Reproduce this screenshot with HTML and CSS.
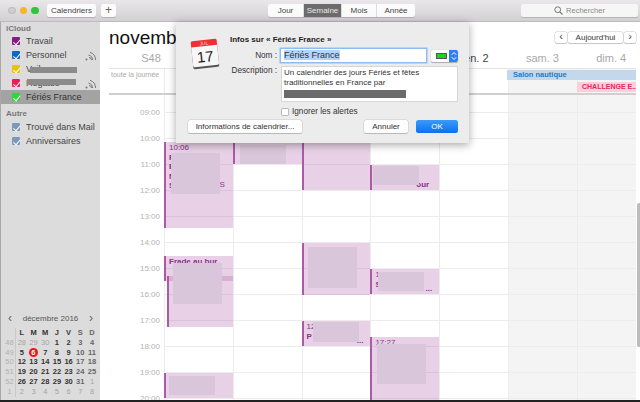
FILE: index.html
```html
<!DOCTYPE html>
<html lang="fr">
<head>
    <meta charset="UTF-8">
    <meta name="viewport" content="width=device-width, initial-scale=1.0">
    <title>Calendrier</title>
    <link rel="stylesheet" href="styles.css">
</head>
<body>
    <div class="window">
        <header class="toolbar">
            <div class="lights">
                <span class="light light-off"></span>
                <span class="light light-min"></span>
                <span class="light light-max"></span>
            </div>
            <button class="tool-btn btn-cals">Calendriers</button>
            <button class="tool-btn btn-add">+</button>
            <div class="segments">
                <span class="segment seg-jour">Jour</span>
                <span class="segment seg-semaine active">Semaine</span>
                <span class="segment seg-mois">Mois</span>
                <span class="segment seg-annee">Année</span>
            </div>
            <div class="search">
                <svg width="9" height="9" viewBox="0 0 9 9"><circle cx="3.7" cy="3.7" r="2.9" fill="none" stroke="#777" stroke-width="1"/><path d="M5.8 5.8 8.5 8.5" stroke="#777" stroke-width="1.1"/></svg>
                <span>Rechercher</span>
            </div>
        </header>

        <div class="content">
            <aside class="sidebar">
                <h4 class="side-title">iCloud</h4>
                <ul class="cal-list">
                    <li class="cal-row"><span class="check c-travail"></span>Travail</li>
                    <li class="cal-row"><span class="check c-perso"></span>Personnel
                        <svg class="shared" width="11" height="10" viewBox="0 0 11 10"><g fill="none" stroke="#777" stroke-width="1"><path d="M4.5 9A2.5 2.5 0 0 0 2 6.5" transform="translate(2 0)"/><path d="M7.5 9A5 5 0 0 0 3.5 4.1"/><path d="M10.5 9A8 8 0 0 0 5 1.3"/></g><circle cx="1.5" cy="8.5" r="1" fill="#777"/></svg>
                    </li>
                    <li class="cal-row"><span class="check c-jaune"></span>Voile<span class="redact-side r-one"></span></li>
                    <li class="cal-row"><span class="check c-rose"></span>Régates<span class="redact-side r-two"></span>
                        <svg class="shared" width="11" height="10" viewBox="0 0 11 10"><g fill="none" stroke="#777" stroke-width="1"><path d="M4.5 9A2.5 2.5 0 0 0 2 6.5" transform="translate(2 0)"/><path d="M7.5 9A5 5 0 0 0 3.5 4.1"/><path d="M10.5 9A8 8 0 0 0 5 1.3"/></g><circle cx="1.5" cy="8.5" r="1" fill="#777"/></svg>
                    </li>
                    <li class="cal-row selected"><span class="check c-vert"></span>Fériés France</li>
                </ul>
                <h4 class="side-title side-other">Autre</h4>
                <ul class="cal-list">
                    <li class="cal-row"><span class="check c-gris"></span>Trouvé dans Mail</li>
                    <li class="cal-row"><span class="check c-gris"></span>Anniversaires</li>
                </ul>

                <div class="mini">
                    <div class="mini-head">
                        <span class="mini-arrow">‹</span>
                        <span>décembre 2016</span>
                        <span class="mini-arrow">›</span>
                    </div>
                    <div class="mini-grid">
                        <span class="wk"></span><b>L</b><b>M</b><b>M</b><b>J</b><b>V</b><em>S</em><em>D</em>
                        <span class="wk">48</span><i>28</i><i>29</i><i>30</i><b>1</b><b>2</b><em>3</em><em>4</em>
                        <span class="wk">49</span><b>5</b><b class="today">6</b><b>7</b><b>8</b><b>9</b><em>10</em><em>11</em>
                        <span class="wk">50</span><b>12</b><b>13</b><b>14</b><b>15</b><b>16</b><em>17</em><em>18</em>
                        <span class="wk">51</span><b>19</b><b>20</b><b>21</b><b>22</b><b>23</b><em>24</em><em>25</em>
                        <span class="wk">52</span><b>26</b><b>27</b><b>28</b><b>29</b><b>30</b><em>31</em><i>1</i>
                        <span class="wk">1</span><i>2</i><i>3</i><i>4</i><i>5</i><i>6</i><i>7</i><i>8</i>
                    </div>
                </div>
            </aside>

            <main class="main">
                <div class="main-head">
                    <h1 class="month">novembre 2016</h1>
                    <div class="nav">
                        <span class="nav-btn">‹</span>
                        <span class="nav-btn nav-today">Aujourd'hui</span>
                        <span class="nav-btn">›</span>
                    </div>
                </div>

                <div class="day-head">
                    <span class="week-no">S48</span>
                    <span>lun. 28</span>
                    <span>mar. 29</span>
                    <span>mer. 30</span>
                    <span>jeu. 1</span>
                    <span class="dark">ven. 2</span>
                    <span>sam. 3</span>
                    <span>dim. 4</span>
                </div>

                <div class="allday">
                    <span class="allday-label">toute la journée</span>
                    <div class="allday-grid">
                        <span class="col-line"></span>
                        <span class="col-line"></span>
                        <span class="col-line"></span>
                        <span class="col-line"></span>
                        <span class="col-line"></span>
                        <span class="col-line we"></span>
                        <span class="col-line we"></span>
                        <span class="banner salon">Salon nautique</span>
                        <span class="banner challenge">CHALLENGE E..</span>
                    </div>
                </div>

                <div class="timeline">
                    <div class="hours">
                        <span>09:00</span><span>10:00</span><span>11:00</span><span>12:00</span><span>13:00</span><span>14:00</span><span>15:00</span><span>16:00</span><span>17:00</span><span>18:00</span><span>19:00</span><span>20:00</span>
                    </div>
                    <div class="days">
                        <div class="day">
                            <div class="event ev-a">10:06<br><strong>F<br>E<br>N<br>S</strong><span class="tail">S</span><span class="redact rd-a"></span></div>
                            <div class="event ev-b"><strong>Frade au bur</strong></div>
                            <div class="event ev-c"></div>
                            <span class="redact rd-c"></span>
                            <div class="event ev-d"><span class="redact rd-d"></span></div>
                        </div>
                        <div class="day">
                            <div class="event ev-e"><span class="redact rd-e"></span></div>
                        </div>
                        <div class="day">
                            <div class="event ev-f"></div>
                            <div class="event ev-g"><span class="redact rd-g"></span></div>
                            <div class="event ev-h">12<br><strong>P</strong><span class="tail">...</span><span class="redact rd-h"></span></div>
                        </div>
                        <div class="day">
                            <div class="event ev-i"><span class="tail">our</span><span class="redact rd-i"></span></div>
                            <div class="event ev-j">1<br><strong>S</strong><span class="tail">...</span><span class="redact rd-j"></span></div>
                            <div class="event ev-k">17:27<span class="redact rd-k"></span></div>
                        </div>
                        <div class="day"></div>
                        <div class="day we"></div>
                        <div class="day we"></div>
                    </div>
                </div>
                <div class="scrollbar"></div>
            </main>
        </div>

        <section class="dialog">
            <svg class="cal-icon" width="36" height="38" viewBox="0 0 36 38">
                <g transform="rotate(-6 18 19)">
                    <rect x="5" y="6" width="26" height="27" rx="1.5" fill="#555"/>
                    <rect x="5" y="5" width="26" height="26" rx="1.5" fill="#f7f7f7"/>
                    <path d="M5 11V6.5A1.5 1.5 0 0 1 6.500 5h23A1.500 1.500 0 0 1 31 6.500V11Z" fill="#ee2f36"/>
                    <text x="18" y="10" font-size="5" text-anchor="middle" fill="#ffd0d0" font-family="Liberation Sans, sans-serif">JUL</text>
                    <text x="18" y="27" font-size="15" text-anchor="middle" fill="#222" font-family="Liberation Sans, sans-serif">17</text>
                </g>
            </svg>
            <div class="dialog-body">
                <h3 class="dialog-title">Infos sur « Fériés France »</h3>
                <div class="field">
                    <label>Nom :</label>
                    <div class="name-input"><span class="sel">Fériés France</span></div>
                    <div class="color-pop">
                        <span class="color-well"><span></span></span>
                        <span class="color-arrows">
                            <svg width="6" height="10" viewBox="0 0 6 10"><path d="M.8 3.800 3 1.500 5.200 3.800M.8 6.200 3 8.500 5.200 6.200" fill="none" stroke="#fff" stroke-width="1"/></svg>
                        </span>
                    </div>
                </div>
                <div class="field field-desc">
                    <label>Description :</label>
                    <div class="desc">Un calendrier des jours Fériés et fêtes traditionnelles en France par<br><span class="redact-desc"></span></div>
                </div>
                <div class="ignore"><span class="box"></span>Ignorer les alertes</div>
            </div>
            <div class="dialog-actions">
                <button class="dlg-btn btn-info">Informations de calendrier...</button>
                <button class="dlg-btn btn-cancel">Annuler</button>
                <button class="dlg-btn btn-ok">OK</button>
            </div>
        </section>
    </div>
</body>
</html>
```

FILE: styles.css
```css
* {
    box-sizing: border-box;
}

html, body {
    margin: 0;
    height: 100%;
    overflow: hidden;
}

body {
    background: #222;
    color: #333;
    font-family: "Liberation Sans", Arial, sans-serif;
    font-size: 9px;
}

ul {
    list-style: none;
    margin: 0;
    padding: 0;
}

.window {
    position: relative;
    width: 640px;
    height: 400px;
    display: flex;
    flex-direction: column;
    background: #fff;
}

/* toolbar */
.toolbar {
    height: 22px;
    flex: none;
    display: flex;
    align-items: flex-start;
    padding: 4px 2px 0 8px;
    background: linear-gradient(#e9e7e9, #d2d0d2);
    border-bottom: 1px solid #bdbbbd;
}

.lights {
    display: flex;
    gap: 4px;
    width: 39px;
    padding-top: 2.500px;
}

.light {
    width: 7.500px;
    height: 7.500px;
    border-radius: 50%;
}

.light-off { background: #cfcdcf; border: 1px solid #b9b7b9; }
.light-min { background: #f5b52c; }
.light-max { background: #2fc53f; }

.tool-btn {
    height: 12.500px;
    padding: 0;
    border: 0;
    border-radius: 2px;
    background: #fbfbfb;
    box-shadow: 0 1px 0 #b5b3b5;
    color: #444;
    font: 8px "Liberation Sans", Arial, sans-serif;
}

.btn-cals { width: 49px; }
.btn-add { width: 15px; margin-left: 5px; font-size: 12px; line-height: 10px; color: #666; }

.segments {
    display: flex;
    height: 13px;
    margin-left: 152px;
    border-radius: 2px;
    background: #fbfbfb;
    box-shadow: 0 1px 0 #b5b3b5;
    font-size: 8px;
    line-height: 13px;
    color: #444;
    text-align: center;
}

.segment { border-right: 1px solid #ddd; }
.seg-jour { width: 36px; }
.seg-semaine { width: 38px; }
.seg-mois { width: 35px; }
.seg-annee { width: 38px; border-right: 0; }

.segment.active {
    background: #6c6c6c;
    color: #e8e8e8;
}

.search {
    width: 117px;
    height: 12.500px;
    margin-left: auto;
    display: flex;
    align-items: center;
    justify-content: center;
    gap: 3px;
    border-radius: 2px;
    background: #f6f6f6;
    box-shadow: 0 1px 0 #b5b3b5;
    font-size: 7.500px;
    color: #8a8a8a;
}

/* sidebar */
.content {
    flex: 1;
    display: flex;
    min-height: 0;
}

.sidebar {
    width: 100px;
    flex: none;
    display: flex;
    flex-direction: column;
    background: #dddcdd;
    border-left: 1px solid #a8a8a8;
    padding-top: 2px;
}

.side-title {
    margin: 0 0 0 5px;
    height: 10px;
    font-size: 8px;
    line-height: 10px;
    font-weight: bold;
    color: #777;
}

.side-other { margin: 5px 0 1px 5px; }

.cal-row {
    position: relative;
    height: 14px;
    display: flex;
    align-items: center;
    padding-left: 11px;
    font-size: 9px;
    color: #444;
}

.cal-row.selected { background: #a3a3a3; color: #333; }

.check {
    position: relative;
    width: 8px;
    height: 8px;
    margin-right: 6px;
    border-radius: 1px;
}

.check::after {
    content: "";
    position: absolute;
    left: 2.500px;
    top: .5px;
    width: 3px;
    height: 5.500px;
    border: solid #fff;
    border-width: 0 1px 1px 0;
    transform: rotate(40deg);
}

.c-travail { background: #871b85; }
.c-perso { background: #1068c6; }
.c-jaune { background: #e6c40e; }
.c-rose { background: #ef1a5d; }
.c-vert { background: #2fd53a; }
.c-gris { background: #7f98ba; }

.shared {
    position: absolute;
    right: 4px;
    top: 3px;
}

.redact-side {
    position: absolute;
    height: 5.500px;
    background: #8b8b8b;
}

.r-one { left: 29px; top: 5px; width: 47px; }
.r-two { left: 26px; top: 3px; width: 49px; }

/* mini calendar */
.mini {
    margin-top: auto;
    padding: 0 3px 3px 3px;
}

.mini-head {
    display: flex;
    justify-content: space-between;
    align-items: center;
    height: 12px;
    padding: 0 4px 0 4px;
    margin-bottom: 3.500px;
    font-size: 8px;
    color: #555;
}

.mini-arrow { font-size: 12px; line-height: 10px; color: #666; }

.mini-grid {
    display: grid;
    grid-template-columns: 12px repeat(7, 11.700px);
    grid-auto-rows: 9.900px;
    font-size: 7.500px;
    line-height: 9.900px;
    text-align: center;
}

.mini-grid b { font-weight: bold; color: #333; }
.mini-grid i { font-style: normal; color: #a5a5a5; }
.mini-grid em { font-style: normal; font-weight: bold; color: #666; }

.wk {
    color: #b0b0b0;
    border-right: 1px solid #c8c8c8;
}

.mini-grid .today {
    width: 9.500px;
    height: 9.500px;
    margin-left: 1px;
    border-radius: 50%;
    background: #f0141a;
    color: #fff;
}

/* main calendar */
.main {
    position: relative;
    flex: 1;
    min-width: 0;
    display: flex;
    flex-direction: column;
    padding: 0 4px 0 9px;
    background: #fff;
}

.main-head {
    height: 25px;
    display: flex;
    justify-content: space-between;
    align-items: flex-start;
    flex: none;
}

.month {
    margin: 5px 0 0;
    font-size: 19px;
    line-height: 22px;
    font-weight: normal;
    color: #111;
}

.nav {
    display: flex;
    gap: 1px;
    margin-top: 10px;
}

.nav-btn {
    width: 12px;
    height: 11px;
    border-radius: 2px;
    background: #fff;
    box-shadow: 0 0 0 .5px #c6c6c6, 0 1px 0 #c6c6c6;
    text-align: center;
    font-size: 11px;
    line-height: 9px;
    color: #444;
}

.nav-today {
    width: 55px;
    font-size: 8px;
    line-height: 11px;
    color: #333;
}

.day-head {
    height: 22px;
    flex: none;
    display: grid;
    grid-template-columns: 55px repeat(7, 68.800px);
    align-items: center;
    border-bottom: 1px solid #e4e4e4;
    text-align: center;
    font-size: 11px;
    color: #a8a8a8;
}

.week-no { padding-left: 29px; }
.dark { color: #444; }

.allday {
    height: 26px;
    flex: none;
    display: flex;
    border-bottom: 2px solid #d0d0d0;
}

.allday-label {
    width: 55px;
    flex: none;
    padding: 2px 0 0 2px;
    font-size: 7px;
    color: #aaa;
    white-space: nowrap;
}

.allday-grid {
    position: relative;
    flex: 1;
    min-width: 0;
    display: grid;
    grid-template-columns: repeat(7, 68.800px);
    overflow: hidden;
}

.col-line { border-left: 1px solid #ececec; }
.col-line.we, .day.we { background-color: #f4f4f4; }

.banner {
    position: absolute;
    height: 10px;
    font-weight: bold;
    line-height: 10px;
    white-space: nowrap;
    overflow: hidden;
}

.salon {
    left: 343px;
    top: 1px;
    width: 129px;
    padding-left: 6px;
    font-size: 7.500px;
    background: #c3d8ec;
    color: #1c7cc0;
}

.challenge {
    left: 413px;
    top: 13px;
    width: 59px;
    padding-left: 5px;
    font-size: 7px;
    background: #fbd0dc;
    color: #e7245a;
}

.timeline {
    position: relative;
    flex: 1;
    min-height: 0;
    display: flex;
    overflow: hidden;
}

.hours {
    width: 55px;
    flex: none;
    display: flex;
    flex-direction: column;
    padding: 13px 4px 0 0;
    text-align: right;
    font-size: 8px;
    color: #b4b4b4;
}

.hours span {
    height: 26px;
    flex: none;
    line-height: 10px;
}

.days {
    flex: 1;
    display: grid;
    grid-template-columns: repeat(7, 68.800px);
}

.day {
    position: relative;
    height: 320px;
    border-left: 1px solid #ececec;
    background-image: linear-gradient(#ececec 1px, transparent 1px);
    background-size: 100% 26px;
    background-position: 0 17px;
}

/* events, placed from the hour lines */
.event {
    position: absolute;
    left: -1px;
    right: 0;
    padding: 1px 0 0 3px;
    background: rgba(171, 90, 165, .28);
    border-left: 2px solid #ab5aa5;
    font-size: 8px;
    line-height: 9.500px;
    color: #8d2f88;
    overflow: hidden;
}

.tail {
    position: absolute;
    right: 7px;
    bottom: 1px;
    font-weight: bold;
}

.redact {
    position: absolute;
    background: #dac6da;
}

.ev-a { top: 47px; height: 86px; }
.ev-a .tail { right: 8px; bottom: auto; top: 38px; font-weight: normal; }
.ev-b { top: 161px; height: 25px; }
.ev-c { top: 181px; height: 51px; left: 2px; }
.ev-d { top: 278px; height: 25px; }
.ev-e { top: 43px; height: 26px; }
.ev-f { top: 40px; height: 55px; }
.ev-g { top: 148px; height: 52px; }
.ev-h { top: 226px; height: 25px; }
.ev-i { top: 70px; height: 25px; }
.ev-i .tail { right: 10px; }
.ev-j { top: 174px; height: 25px; }
.ev-k { top: 242px; height: 65px; }

.rd-a { left: 5px; top: 11px; width: 49px; height: 41px; }
.rd-c { left: 8px; top: 168px; width: 49px; height: 41px; }
.rd-d { left: 3px; top: 3px; width: 46px; height: 19px; }
.rd-e { left: 5px; top: 7px; width: 46px; height: 19px; }
.rd-g { left: 4px; top: 4px; width: 49px; height: 41px; }
.rd-h { left: 9px; top: 1px; width: 46px; height: 20px; }
.rd-i { left: 1px; top: 1px; width: 46px; height: 19px; }
.rd-j { left: 6px; top: 3px; width: 46px; height: 19px; }
.rd-k { left: 5px; top: 7px; width: 49px; height: 40px; }

.scrollbar {
    position: absolute;
    right: 0;
    top: 181px;
    width: 3px;
    height: 144px;
    border-radius: 2px 0 0 2px;
    background: #bcbcbc;
}

/* dialog sheet */
.dialog {
    position: absolute;
    left: 176px;
    top: 22px;
    width: 293px;
    height: 121px;
    padding: 13px 11px 0 12px;
    background: #ececec;
    box-shadow: 0 2px 8px rgba(0, 0, 0, .35);
    display: flex;
    flex-wrap: wrap;
    align-content: flex-start;
}

.cal-icon {
    width: 36px;
    height: 38px;
    margin-right: 7px;
    margin-left: -1px;
}

.dialog-body {
    width: 228px;
    font-size: 9px;
    color: #333;
}

.dialog-title {
    margin: 0;
    height: 11px;
    font-size: 8px;
    line-height: 9px;
    font-weight: bold;
    color: #222;
}

.field {
    display: flex;
    align-items: center;
    height: 15px;
    margin-top: 2px;
}

.field label {
    width: 47px;
    margin-right: 4px;
    text-align: right;
    white-space: nowrap;
    font-size: 8.200px;
}

.name-input {
    width: 145px;
    height: 13px;
    background: #fff;
    box-shadow: 0 0 0 1.500px #8fbdf0;
    padding: 1px 0 0 3px;
    line-height: 11px;
}

.sel { background: #b3d4fb; }

.color-pop {
    width: 27px;
    height: 12px;
    margin-left: 5px;
    display: flex;
    border-radius: 2px;
    background: #fff;
    box-shadow: 0 .5px 1px #aaa;
}

.color-well {
    flex: 1;
    padding: 3px 2px 0 5px;
}

.color-well span {
    display: block;
    height: 6px;
    background: #20d020;
    border: 1px solid #555;
}

.color-arrows {
    width: 9px;
    padding: 1px 0 0 1.500px;
    border-radius: 0 2px 2px 0;
    background: #2d80f5;
}

.field-desc {
    align-items: flex-start;
    height: 37px;
    margin-top: 3px;
}

.desc {
    width: 177px;
    height: 36px;
    padding: 1px 3px 0 2px;
    background: #fff;
    border: 1px solid #d6d6d6;
    font-size: 8px;
    line-height: 10.300px;
}

.redact-desc {
    display: block;
    width: 122px;
    height: 8px;
    margin-top: 1px;
    background: #6b6b6b;
}

.ignore {
    display: flex;
    align-items: center;
    height: 11px;
    margin: 3px 0 0 51px;
    font-size: 8.200px;
}

.box {
    width: 8px;
    height: 8px;
    margin-right: 3px;
    border: 1px solid #bbb;
    border-radius: 1px;
    background: #fff;
}

.dialog-actions {
    width: 100%;
    display: flex;
    margin-top: 3px;
}

.dlg-btn {
    height: 12.500px;
    padding: 0;
    border: 0;
    border-radius: 2.500px;
    background: #fdfdfd;
    box-shadow: 0 0 0 .5px #c8c8c8, 0 1px 0 #aaa;
    color: #333;
    font: 8px "Liberation Sans", Arial, sans-serif;
}

.btn-info { width: 114px; }
.btn-cancel { width: 44px; margin-left: auto; }
.btn-ok {
    width: 42px;
    margin-left: 8px;
    background: linear-gradient(#3a9bfb, #0f6ff0);
    box-shadow: none;
    color: #fff;
}
```
